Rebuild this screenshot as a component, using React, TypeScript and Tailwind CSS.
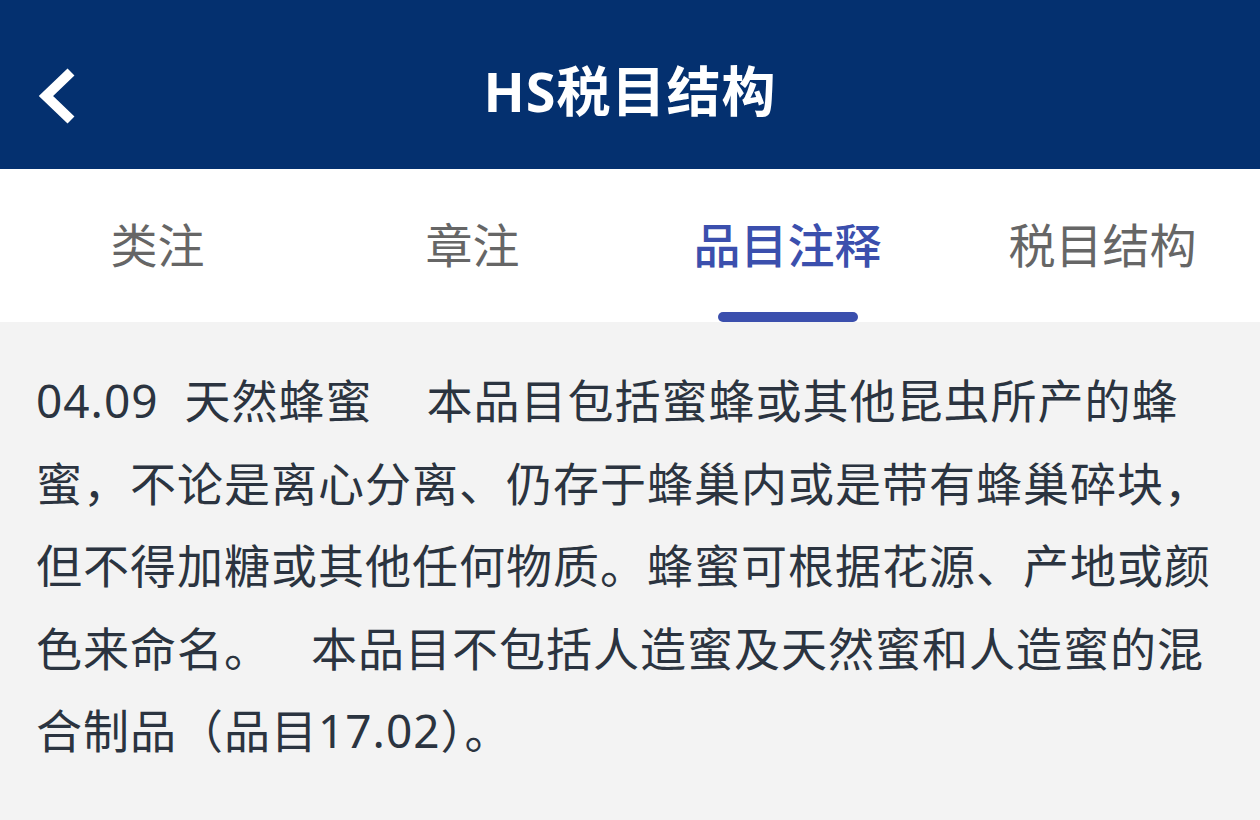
const tabs = ['类注', '章注', '品目注释', '税目结构'];
const active = 2;

function BackIcon() {
    return (
        <svg width="44" height="64" viewBox="0 0 44 64" fill="none">
            <polyline points="34,4 9,28 34,52" stroke="white" strokeWidth="10" strokeLinecap="butt" strokeLinejoin="miter" />
        </svg>
    );
}

export default function App() {
    return (
        <div
            className="w-[1260px] h-[820px] flex flex-col bg-[#f3f3f3] overflow-hidden"
            style={{ fontFamily: '"Noto Sans", "Noto Sans CJK SC", sans-serif' }}
        >
            <header className="h-[169px] bg-[#04306f] flex items-center relative shrink-0">
                <button className="absolute left-[37px] top-[68px]">
                    <BackIcon />
                </button>
                <h1 className="w-full text-center text-white font-bold text-[54px] leading-none tracking-[1px] pt-[12px]">HS税目结构</h1>
            </header>

            <nav className="h-[153px] bg-white grid grid-cols-4 shrink-0">
                {tabs.map((t, i) => (
                    <div key={t} className="relative flex items-center justify-center">
                        <span
                            className={
                                i === active
                                    ? 'text-[47px] leading-none text-[#3b4fad] font-medium'
                                    : 'text-[47px] leading-none text-[#666666]'
                            }
                        >
                            {t}
                        </span>
                        {i === active && (
                            <div className="absolute bottom-0 left-1/2 -translate-x-1/2 w-[140px] h-[10px] rounded-full bg-[#3b4fad]" />
                        )}
                    </div>
                ))}
            </nav>

            <main className="pt-[37px] pl-[36px] pr-[24px]">
                <p className="text-[46px] leading-[82.5px] tracking-[1px] text-[#2b3440] whitespace-pre-wrap">
                    04.09  天然蜂蜜
                    <span className="inline-block w-[54px]" />
                    本品目包括蜜蜂或其他昆虫所产的蜂蜜，不论是离心分离、仍存于蜂巢内或是带有蜂巢碎块，但不得加糖或其他任何物质。蜂蜜可根据花源、产地或颜色来命名。
                    <span className="inline-block w-[40px]" />
                    本品目不包括人造蜜及天然蜜和人造蜜的混合制品（品目17.02）。
                </p>
            </main>
        </div>
    );
}
